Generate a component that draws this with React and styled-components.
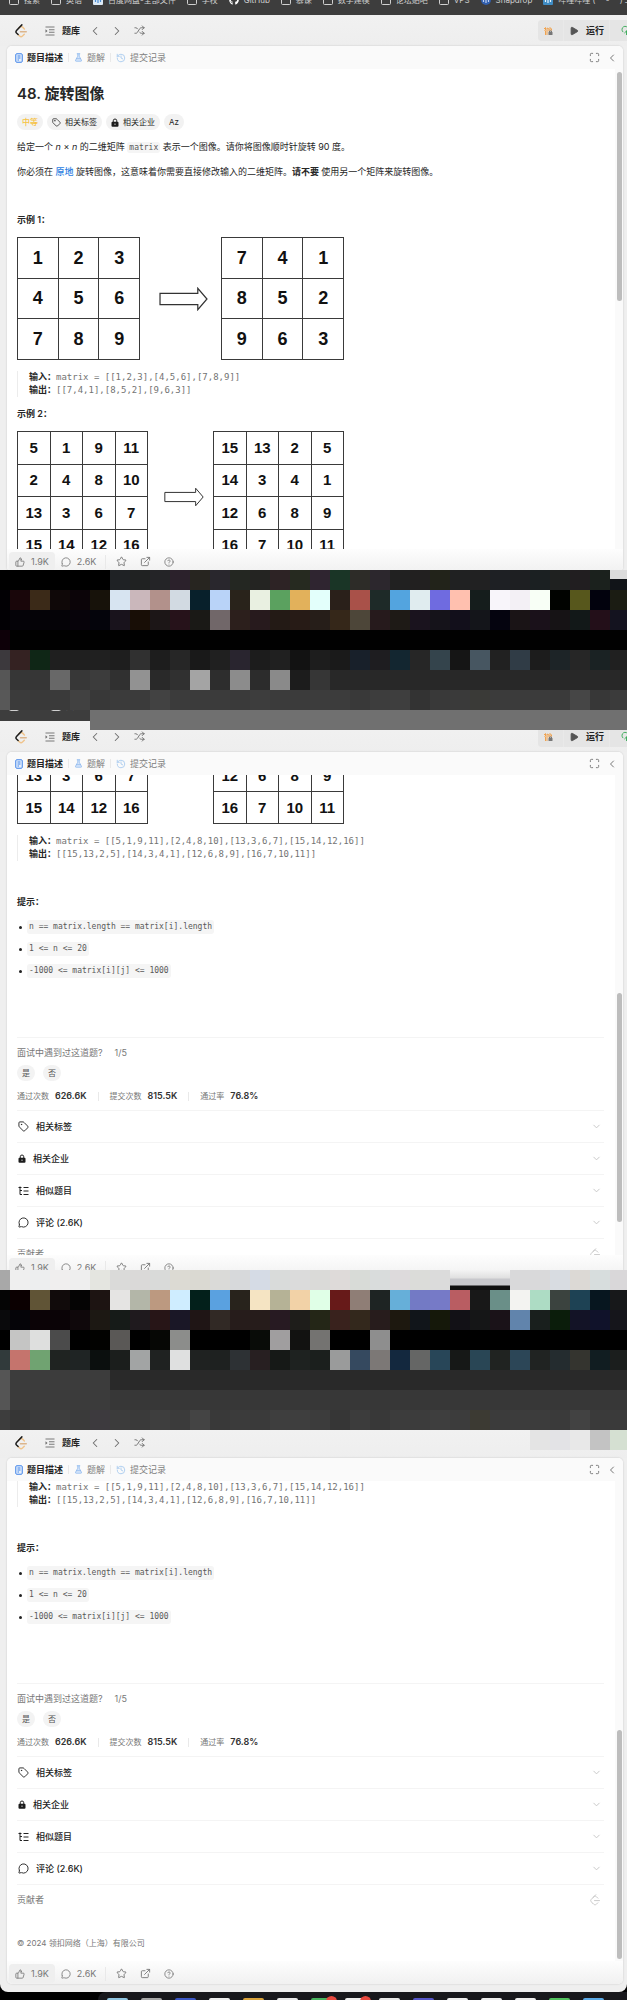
import React from "react";
import styled, { createGlobalStyle, css } from "styled-components";
import {
  Tag, MessageCircle, Star, ExternalLink, CircleQuestionMark, ThumbsUp,
  Shuffle, ChevronLeft, ChevronRight, ChevronDown, Maximize, History, Play,
  CloudUpload, FlaskConical,
} from "lucide-react";
import { FaGithub } from "react-icons/fa";

const Global = createGlobalStyle`
  * { box-sizing: border-box; }
  body { margin: 0; background: #000; font-family: Inter, "Noto Sans CJK SC", sans-serif; font-size: 9px; line-height: 14px; color: #262626; }
  h1, h2, p, ul, pre, figure { margin: 0; padding: 0; }
  button { font: inherit; color: inherit; border: 0; padding: 0; background: none; }
  a { color: inherit; text-decoration: none; }
  svg { flex: none; display: block; }
`;

const mono = css`font-family: "DejaVu Sans Mono", "Noto Sans CJK SC", monospace;`;

/* ---------- window frame ---------- */
const Window = styled.section`
  position: relative;
  background: #efefef;
  overflow: hidden;
  ${(p) => p.$crop && `height: ${p.$crop}px;`}
  ${(p) => p.$last && "border-radius: 0 0 8px 8px;"}
`;

const Bookmarks = styled.nav`
  height: ${(p) => (p.$cut ? 11 : 15)}px;
  background: #3d3d3d;
  overflow: hidden;
`;
const BookmarkRow = styled.div`
  display: flex;
  gap: 11px;
  padding-left: 9px;
  margin-top: -${(p) => (p.$cut ? 9 : 5)}px;
  white-space: nowrap;
`;
const Bookmark = styled.a`
  display: flex;
  flex: none;
  align-items: center;
  gap: 5px;
  font-size: 8px;
  line-height: 10px;
  color: #d0d0d0;
`;

const Header = styled.header`
  height: ${(p) => (p.$cut ? 28 : 31)}px;
  display: flex;
  align-items: center;
  justify-content: space-between;
  padding-left: 14px;
  padding-bottom: ${(p) => (p.$cut ? 3 : 0)}px;
  background: linear-gradient(#f1f1f1, #eeeeee);
`;
const HeaderSide = styled.div`
  display: flex;
  align-items: center;
  color: #6c6c6c;
`;
const BrandLink = styled.a`margin-right: 17px;`;
const BankLink = styled.a`
  display: flex;
  align-items: center;
  gap: 7px;
  margin-right: 4px;
  strong { color: #222; font-weight: 600; }
`;
const ArrowButton = styled.button`
  width: 22px;
  display: flex;
  justify-content: center;
`;
const RunGroup = styled.div`
  display: flex;
  height: 21px;
  background: #e9e9e9;
  border-radius: 4px 0 0 4px;
  overflow: hidden;
`;
const RunButton = styled.button`
  display: flex;
  align-items: center;
  gap: 7px;
  padding: 0 5px;
  margin-right: 1px;
  color: #222;
  font-weight: 600;
  background: #e5e5e5;
`;
const DailyButton = styled(RunButton)`width: 25px;`;
const CloudButton = styled(RunButton)`
  width: 17px;
  margin: 0;
  padding-left: 11px;
  color: #35a853;
`;

/* ---------- panel ---------- */
const Panel = styled.div`
  margin: 0 4px 0 7px;
  background: #fff;
  border-radius: 5px;
  box-shadow: 0 0 2px rgba(0, 0, 0, 0.18);
  overflow: hidden;
  ${(p) => p.$last && "margin-bottom: 8px;"}
`;
const TabBar = styled.div`
  display: flex;
  align-items: center;
  height: 23px;
  padding: 0 5px 0 8px;
  background: #fafafa;
`;
const Tab = styled.button`
  display: flex;
  align-items: center;
  gap: 4px;
  color: ${(p) => (p.$active ? "#222" : "#808080")};
  font-weight: ${(p) => (p.$active ? 600 : 400)};
`;
const Divider = styled.span`
  width: 1px;
  height: ${(p) => p.$h || 9}px;
  margin: 0 ${(p) => p.$m || 5}px;
  background: #e9e9e9;
`;
const TabTools = styled.div`
  display: flex;
  gap: 6px;
  margin-left: auto;
  color: #777;
`;
const Viewport = styled.div`
  display: flex;
  height: 480px;
  overflow: hidden;
`;
const Scrolled = styled.div`
  flex: 1;
  min-width: 0;
  padding: 0 11px 0 10px;
  margin-top: -${(p) => p.$by || 0}px;
`;
const Rail = styled.div`
  width: 8px;
  padding: ${(p) => p.$top}px 1px 0 2px;
  background: #fafafa;
`;
const Thumb = styled.div`
  height: 229px;
  border-radius: 3px;
  background: #bdbdbd;
`;

/* ---------- problem text ---------- */
const Title = styled.h1`
  padding-top: 13px;
  font-size: 15px;
  line-height: 24px;
  font-weight: 600;
`;
const Pills = styled.div`
  display: flex;
  gap: 4px;
  margin-top: 8px;
`;
const Pill = styled.button`
  display: flex;
  align-items: center;
  gap: 4px;
  height: 16px;
  padding: 0 5px;
  border-radius: 8px;
  background: #f2f2f2;
  font-size: 8px;
  ${(p) => p.$level && "color: #f6c243; font-weight: 500;"}
`;
const Para = styled.p`
  margin-top: 10px;
  a { color: #2a7de1; font-weight: 500; }
`;
const Code = styled.code`
  ${mono}
  font-size: 8px;
  padding: 1px 2px;
  border-radius: 3px;
  background: #f5f5f5;
  color: #595959;
`;
const Heading = styled.h2`
  font-size: 9px;
  line-height: 14px;
  font-weight: 600;
  margin-top: ${(p) => (p.$wide ? 34 : 10)}px;
`;
const Figure = styled.figure`
  display: flex;
  align-items: center;
  justify-content: space-between;
  width: 327px;
  margin-top: ${(p) => (p.$flush ? 0 : 10)}px;
  > svg { margin-left: 6px; }
`;
const Matrix = styled.table`
  border-collapse: collapse;
  table-layout: fixed;
  width: ${(p) => (p.$small ? 131 : 123)}px;
  height: ${(p) => p.$h}px;
  font: bold ${(p) => (p.$small ? 15 : 18)}px/18px "Liberation Sans", sans-serif;
  color: #111;
  td { border: 1px solid #3a3a3a; padding: 0; text-align: center; }
`;
const Example = styled.pre`
  ${mono}
  font-size: 9px;
  line-height: 13px;
  margin-top: ${(p) => (p.$flush ? 0 : 11)}px;
  padding-left: 11px;
  border-left: 1px solid #ececec;
  color: #737373;
  b { color: #262626; font-weight: 600; }
`;
const Hints = styled.ul`
  display: flex;
  flex-direction: column;
  gap: 8px;
  margin-top: 11px;
  padding-left: 2px;
  list-style: none;
`;
const Hint = styled.li`
  display: flex;
  align-items: center;
  gap: 5px;
  line-height: 14px;
  &::before { content: ""; width: 3px; height: 3px; border-radius: 50%; background: #222; }
  code { line-height: 12px; }
`;

/* ---------- statistics and accordions ---------- */
const Survey = styled.div`
  margin-top: 59px;
  padding-top: 8px;
  border-top: 1px solid #f4f4f4;
  color: #777;
`;
const Question = styled.div`
  display: flex;
  gap: 12px;
`;
const Answers = styled.div`
  display: flex;
  gap: 8px;
  margin-top: 5px;
`;
const Answer = styled.button`
  width: 18px;
  height: 16px;
  border-radius: 8px;
  background: #f3f3f3;
  color: #555;
  font-size: 8px;
`;
const Stats = styled.div`
  display: flex;
  align-items: center;
  margin: 8px 0 7px;
  font-size: 8px;
  b { margin-left: 6px; font-size: 9px; font-weight: 600; color: #333; }
`;
const Row = styled.button`
  display: flex;
  align-items: center;
  width: 100%;
  height: 32px;
  gap: 7px;
  padding: 0 2px 0 1px;
  border-top: 1px solid #f4f4f4;
  color: #222;
  font-weight: 500;
  svg:last-child { margin-left: auto; color: #c4c4c4; }
`;
const Contributors = styled.div`
  display: flex;
  align-items: center;
  justify-content: space-between;
  height: 30px;
  padding-right: 3px;
  border-top: 1px solid #f4f4f4;
  color: #777;
`;
const Copyright = styled.p`
  margin-top: 22px;
  font-size: 8px;
  color: #777;
`;

/* ---------- panel footer ---------- */
const Footer = styled.footer`
  display: flex;
  align-items: center;
  height: 23px;
  padding: 3px 2px 1px;
  color: #777;
  background: linear-gradient(#fdfdfd, #f1f1f1);
`;
const FootButton = styled.button`
  display: flex;
  align-items: center;
  justify-content: center;
  gap: 6px;
  height: 19px;
  padding: 0 6px;
  border-radius: 4px;
  background: ${(p) => (p.$on ? "#efefef" : "none")};
`;
const FootIcon = styled.button`
  display: flex;
  justify-content: center;
  width: 24px;
`;

/* ---------- pixelated strips ---------- */
const Strip = styled.div`
  display: flex;
  height: 20px;
  overflow: hidden;
`;
const Cell = styled.span`
  flex: 0 0 20px;
  ${(p) => p.$lead && "flex-basis: 10px;"}
  &:last-child { flex-grow: 1; }
`;
const Cover = styled.div`
  position: absolute;
  top: 0;
  right: 0;
  left: ${(p) => p.$left}px;
  overflow: hidden;
`;

/* ---------- dock ---------- */
const Dock = styled.div`
  display: flex;
  align-items: flex-end;
  gap: 13px;
  height: 8px;
  margin-left: 98px;
  padding-left: 9px;
  overflow: hidden;
  background: #18181c;
  border-radius: 8px 0 0 0;
`;
const DockIcon = styled.span`
  position: relative;
  flex: 0 0 21px;
  height: 2px;
  border-radius: 3px 3px 0 0;
  background: ${(p) => p.$c};
`;
const Badge = styled.i`
  position: absolute;
  right: -5px;
  top: -2px;
  width: 11px;
  height: 11px;
  border-radius: 50%;
  background: #e8493f;
`;

/* ---------- icons ---------- */
const Logo = ({ muted, size = 14 }) => (
  <svg width={size} height={size} viewBox="0 0 24 24" fill="none" strokeWidth={muted ? 1.8 : 2.5} strokeLinecap="round">
    <path d="M8 7l2-1.8c1.6-1.2 3.4-1.1 4.8.2l3 3M7 18l2.6 2.6c1.5 1.3 3.5 1.3 5 0l3-3" stroke={muted ? "#c4c4c4" : "#f0c48c"} />
    <path d="M11 13.2h10" stroke={muted ? "#c4c4c4" : "#dcb58c"} />
    <path d="M13.5 1.5L4.3 11c-1.2 1.4-1.2 3.2 0 4.5L7 18" stroke={muted ? "#c4c4c4" : "#1c1c1c"} />
  </svg>
);
const ListIcon = () => (
  <svg width="10" height="10" viewBox="0 0 20 20" fill="none" stroke="currentColor" strokeWidth="1.8">
    <path d="M1 2h18M8 7.5h11M8 12.5h11M1 18h18" />
    <path d="M1 6.5l4 3.5-4 3.500z" fill="currentColor" stroke="none" />
  </svg>
);
const DocIcon = () => (
  <svg width="8" height="10" viewBox="0 0 16 20" fill="none" stroke="#3f83e8" strokeWidth="2">
    <rect x="1.500" y="1.500" width="13" height="17" rx="2" fill="#e6effc" />
    <path d="M5 6h6M5 10h6M5 14h3" />
  </svg>
);
const LockIcon = () => (
  <svg width="8" height="9" viewBox="0 0 16 18">
    <path d="M4.500 8V5.500a3.500 3.500 0 0 1 7 0V8" fill="none" stroke="#222" strokeWidth="2" />
    <rect x="1" y="7.500" width="14" height="10" rx="2" fill="#1c1c1c" />
    <path d="M8 11v3" stroke="#fff" strokeWidth="1.500" />
  </svg>
);
const TreeIcon = () => (
  <svg width="11" height="10" viewBox="0 0 22 20" fill="none" stroke="#222" strokeWidth="2">
    <path d="M4 1v16h4M4 9h4M1 3h6M11 3h10M11 10h10M11 17h10" />
  </svg>
);
const DailyIcon = () => (
  <svg width="10" height="10" viewBox="0 0 20 20" fill="none" strokeWidth="2">
    <path d="M2 6l3-3v15M8 18V4l4 2v5M14 9V3l3 3v3" stroke="#f0a24e" />
    <path d="M2 9h14" stroke="#f0c08c" />
    <rect x="11" y="12" width="8" height="6" rx="1" fill="#777" />
    <path d="M13 12v-2h4v2" stroke="#777" />
  </svg>
);
const FolderIcon = () => (
  <svg width="10" height="10" viewBox="0 0 10 10" fill="none" stroke="#d0d0d0">
    <rect x="0.500" y="1" width="9" height="8.500" rx="1" />
  </svg>
);
const AppIcon = ({ bg, fg, round }) => (
  <svg width="10" height="10" viewBox="0 0 10 10">
    <rect width="10" height="10" rx={round ? 5 : 1} fill={bg} />
    <path d="M2.500 4.500v2.500M5 4v4M7.500 4.500v2.500" stroke={fg} strokeWidth="1.200" />
  </svg>
);
const BigArrow = ({ w, h }) => (
  <svg width={w} height={h} viewBox="0 0 48 23" fill="#fff" stroke="#333" strokeWidth="1.200">
    <path d="M1 6h37V1l9 10.500L38 22v-5H1z" />
  </svg>
);

/* ---------- composed parts ---------- */
const marks = [
  ["搜索"], ["英语"], ["百度网盘-全部文件", <AppIcon bg="#dce9f5" fg="#4d8fd6" />], ["学校"],
  ["GitHub", <FaGithub size={10} color="#fff" />], ["慕课"], ["数学建模"], ["论坛贴吧"], ["VPS"],
  ["Snapdrop", <AppIcon bg="#315fae" fg="#bcd0f0" round />],
  ["哔哩哔哩 ( ゜- ゜)つロ", <AppIcon bg="#3f8cc4" fg="#e8f4ff" />],
];
const BookmarkBar = ({ cut }) => (
  <Bookmarks $cut={cut}>
    <BookmarkRow $cut={cut}>
      {(cut ? marks.slice(0, 2) : marks).map(([name, icon]) => (
        <Bookmark key={name} href="#">{icon || <FolderIcon />}{name}</Bookmark>
      ))}
    </BookmarkRow>
  </Bookmarks>
);

const TopBar = ({ cut }) => (
  <Header $cut={cut}>
    <HeaderSide>
      <BrandLink href="#" aria-label="LeetCode"><Logo /></BrandLink>
      <BankLink href="#"><ListIcon /><strong>题库</strong></BankLink>
      <ArrowButton aria-label="Previous"><ChevronLeft size={14} strokeWidth={1.8} /></ArrowButton>
      <ArrowButton aria-label="Next"><ChevronRight size={14} strokeWidth={1.8} /></ArrowButton>
      <ArrowButton aria-label="Shuffle"><Shuffle size={11} /></ArrowButton>
    </HeaderSide>
    {!cut && (
      <RunGroup>
        <DailyButton aria-label="Daily"><DailyIcon /></DailyButton>
        <RunButton><Play size={10} fill="#555" color="#555" />运行</RunButton>
        <CloudButton aria-label="Submit"><CloudUpload size={11} /></CloudButton>
      </RunGroup>
    )}
  </Header>
);

const Tabs = () => (
  <TabBar>
    <Tab $active><DocIcon />题目描述</Tab>
    <Divider />
    <Tab><FlaskConical size={9} color="#8db8ee" fill="#d5e5fa" />题解</Tab>
    <Divider />
    <Tab><History size={10} color="#a3c8ee" />提交记录</Tab>
    <TabTools>
      <button aria-label="Fullscreen"><Maximize size={11} /></button>
      <button aria-label="Collapse"><ChevronLeft size={12} /></button>
    </TabTools>
  </TabBar>
);

const Grid = ({ rows, small }) => (
  <Matrix $small={small} $h={small ? Math.floor((rows.length * 131 + 1) / 4) : 123}>
    <tbody>
      {rows.map((r, i) => <tr key={i}>{r.map((n) => <td key={n}>{n}</td>)}</tr>)}
    </tbody>
  </Matrix>
);

const in4 = [[5, 1, 9, 11], [2, 4, 8, 10], [13, 3, 6, 7], [15, 14, 12, 16]];
const out4 = [[15, 13, 2, 5], [14, 3, 4, 1], [12, 6, 8, 9], [16, 7, 10, 11]];

const Intro = () => (
  <>
    <Title>48. 旋转图像</Title>
    <Pills>
      <Pill $level>中等</Pill>
      <Pill><Tag size={9} />相关标签</Pill>
      <Pill><LockIcon />相关企业</Pill>
      <Pill>Az</Pill>
    </Pills>
    <Para>给定一个 <em>n</em> × <em>n</em> 的二维矩阵 <Code>matrix</Code> 表示一个图像。请你将图像顺时针旋转 90 度。</Para>
    <Para>你必须在 <a href="#">原地</a> 旋转图像，这意味着你需要直接修改输入的二维矩阵。<strong>请不要 </strong>使用另一个矩阵来旋转图像。</Para>
    <Heading $wide>示例 1：</Heading>
    <Figure>
      <Grid rows={[[1, 2, 3], [4, 5, 6], [7, 8, 9]]} />
      <BigArrow w={49} h={24} />
      <Grid rows={[[7, 4, 1], [8, 5, 2], [9, 6, 3]]} />
    </Figure>
    <Example><b>输入：</b>matrix = [[1,2,3],[4,5,6],[7,8,9]]{"\n"}<b>输出：</b>[[7,4,1],[8,5,2],[9,6,3]]</Example>
    <Heading>示例 2：</Heading>
    <Figure>
      <Grid small rows={in4} />
      <BigArrow w={40} h={20} />
      <Grid small rows={out4} />
    </Figure>
  </>
);

const Rest = ({ flush, full }) => (
  <>
    <Example $flush={flush}><b>输入：</b>matrix = [[5,1,9,11],[2,4,8,10],[13,3,6,7],[15,14,12,16]]{"\n"}<b>输出：</b>[[15,13,2,5],[14,3,4,1],[12,6,8,9],[16,7,10,11]]</Example>
    <Heading $wide>提示：</Heading>
    <Hints>
      <Hint><Code>n == matrix.length == matrix[i].length</Code></Hint>
      <Hint><Code>1 &lt;= n &lt;= 20</Code></Hint>
      <Hint><Code>-1000 &lt;= matrix[i][j] &lt;= 1000</Code></Hint>
    </Hints>
    <Survey>
      <Question><span>面试中遇到过这道题?</span><span>1/5</span></Question>
      <Answers><Answer>是</Answer><Answer>否</Answer></Answers>
      <Stats>
        通过次数<b>626.6K</b><Divider $m={11} />提交次数<b>815.5K</b><Divider $m={11} />通过率<b>76.8%</b>
      </Stats>
    </Survey>
    <Row><Tag size={11} />相关标签<ChevronDown size={11} /></Row>
    <Row><LockIcon />相关企业<ChevronDown size={11} /></Row>
    <Row><TreeIcon />相似题目<ChevronDown size={11} /></Row>
    <Row><MessageCircle size={11} />评论 (2.6K)<ChevronDown size={11} /></Row>
    <Contributors>贡献者<Logo muted size={12} /></Contributors>
    {full && <Copyright>© 2024 领扣网络（上海）有限公司</Copyright>}
  </>
);

const PanelFooter = () => (
  <Footer>
    <FootButton $on><ThumbsUp size={10} />1.9K</FootButton>
    <FootButton><MessageCircle size={10} />2.6K</FootButton>
    <Divider $m={3} $h={14} />
    <FootIcon aria-label="Favourite"><Star size={11} /></FootIcon>
    <FootIcon aria-label="Share"><ExternalLink size={11} /></FootIcon>
    <FootIcon aria-label="Help"><CircleQuestionMark size={10} /></FootIcon>
  </Footer>
);

const Body = ({ scroll, thumb, last, children }) => (
  <Panel $last={last}>
    <Tabs />
    <Viewport>
      <Scrolled $by={scroll}>{children}</Scrolled>
      <Rail $top={thumb}><Thumb /></Rail>
    </Viewport>
    <PanelFooter />
  </Panel>
);

const fill = (n, c) => Array(n).fill(c);
const hex = (s) => s.split(" ").map((c) => "#" + c);
const edge = "linear-gradient(#dcdcdc 0 9px, #111418 9px)";
const gap = "linear-gradient(#f4f4f4, #e0e0e0 8px, #c8c8cc 9px 15px, #101010 16px)";

const stripsA = [
  [...fill(6, "#000"), ...hex("1f2225 202222 242427 2b212b 272520 29272d 242722 242422 2d2325 262a20 2f2530 1a3526 2d2c28 2c272d 212121 222020 22231a 202122 212122 1e2024 1e1f22 1b2022 1f2120 211e20 1b211d"), edge],
  hex("020004 19060a 3b2a18 0f0808 0b0408 17120a d7e4f1 cab7bb b2918b d2dae2 08202b b9d3f8 29231b e9f0e1 5ba15f e2b15b e3fffb 2a201a a95149 1e2a28 53a4df e0ecef 6f6be0 ffc0af 151d1c f8f5fa f3f0f5 f8fff6 010300 57571c 02020d 1b1c13"),
  hex("020004 050308 050307 050307 07030a 04040b 19131c 180e06 1c1617 26121a 1a1916 716769 2c1f1c 271a1d 231a15 271b16 261e19 352719 4d4639 261a1c 1e1a16 1a131e 15131a 120f1b 14151a 05040f 1a1416 1a111a 161315 121818 230f19 14131f"),
  ["#0d0008", ...fill(31, "#010101")],
  hex("3c393d 342222 0f2616 1f1f1f 1f1f1f 202020 1e1e1e 303030 1d1d1d 262626 191919 202020 29252f 1c1c1c 202020 121212 1d1d1d 1a1a1a 18202a 1e1d20 132630 262626 34444c 151515 475661 212121 303c46 1c1c1c 1d2427 262626 1a2223 202020"),
  [...hex("565656 363636 363636 686868 373737 3c3c3c 303030 929292 292929 303030 a4a4a4 2d2d2d 8c8c8c 2c2c2c 8a8a8a 1c1c1c 363636"), ...fill(15, "#282828")],
  hex("585858 3b3b3b 393939 3a3a3a 414141 383838 3b3b3b 3b3b3b 424242 3b3b3b 3b3b3b 3b3b3b 3a3a3a 3d3d3d 3b3b3b 3b3b3b 3c3c3c 3c3c3c 393939 3d3d3d 3e3e3e 333333 393939 3a3a3a 3a3a37 3b3b3b 3b3b3b 3b3b3b 3a3a3a 464646 373737 3b3b3b"),
];

const stripsB = [
  [...hex("a8a8a8 efefef edeeef f0eeee eeeeee e4e5e0 dadad9 dad9d8 d9dad9 dcdad3 dad9d2 dadad8 d7d9db d5dbe5 d9dbda dbdbdb dadad8 dedad9 d8dbd7 d9dcdc dddadc dbdcd9 dbdbdb"), gap, gap, gap, ...hex("d9d9da d9d9da d8dce1 dcd9d5 d7dddd d9d7d9")],
  hex("050505 0b0001 605436 110b0b 050404 1d1412 e5e4e3 b3b6a8 bc9980 cfedff 03201b 5aa1e0 28231c f5e4c3 b5b296 f2d2a7 e0ffe7 671a19 8f7e76 1e2423 66afd9 737ac5 767ac7 b95d62 181818 6a8f88 f3f3f1 addcc4 3b433f 1e4254 07161f 17181a"),
  hex("0a0a0c 050408 0b0306 0a0306 0f080b 1c1813 161b18 1f1a1e 271517 1a1726 1f1515 312925 261c1b 261c1b 271a22 1e1d1a 242617 39221d 33281c 271c1c 1d180f 11151a 15180a 121116 151617 1a1218 6184ac 191f1d 0b1d0b 131326 10122a 15151b"),
  [...hex("000000 c5c5c4 dedfde 4b4b4b 000000 020200 5a5856 000000 060705 8c8d8b 000000 000000 000000 090c08 a09e9f 121211 747371 000000 000000 8e8e8e"), ...fill(12, "#000")],
  hex("313a3b c5746d 70a371 1f2321 1f2424 0b0f0e 1b1e1c a2a4a4 1f2221 dfe0e0 1f2221 1e2120 2d3134 271f21 161917 1e2220 1b1f1d 9a9b9b 35495f 7c7876 13283e 656665 284658 161817 294655 202321 2c4657 202322 242c2f 34342f 111d21 1b1e1d"),
  ["#555", ...fill(5, "#3c3c3c"), ...fill(26, "#292929")],
  ["#555", ...fill(5, "#3b3b3b"), ...fill(26, "#373737")],
  hex("3d3d3d 363636 3a3a3a 3e3e3e 3a3a3a 3d3a3e 3c3c3c 3a3a3a 3e3e3e 3b3b3b 444444 393939 3b3b3b 3a3a3a 3e3e3e 3e3e3e 3c3c3c 363636 3c3c3c 383838 3c3c3c 3c3c3c 3e3e3e 3c3c3c 3c3a33 3b3b3b 3c3c3c 3c3c3c 3a3a3a 424242 3a3a3a 3a3a3a"),
];

const Pixels = ({ rows, lead = true }) => rows.map((row, r) => (
  <Strip key={r}>
    {row.map((c, i) => <Cell key={i} $lead={lead && i === 0} style={{ background: c }} />)}
  </Strip>
));

const dock = ["#8fc4e0", "#a8a8a8", "#3b57c4", "#eee", "#d8a23a", "#e8e8e8", "#49b35e", "#eee", "#e8e8e8", "#5656c8", "#eee", "#eee", "#eee", "#52c15e", "#5aa9e6"];

export default function App() {
  return (
    <main>
      <Global />
      <Window $crop={570}>
        <BookmarkBar />
        <TopBar />
        <Body thumb={3}><Intro /></Body>
      </Window>
      <Pixels rows={stripsA} />
      <Window $crop={560}>
        <BookmarkBar cut />
        <TopBar />
        <Body scroll={16} thumb={218}>
          <Figure $flush>
            <Grid small rows={in4.slice(2)} />
            <Grid small rows={out4.slice(2)} />
          </Figure>
          <Rest />
        </Body>
        <Cover $left={90}><Pixels lead={false} rows={[["#707070"]]} /></Cover>
      </Window>
      <Pixels rows={stripsB} />
      <Window $last>
        <TopBar cut />
        <Body last thumb={249}><Rest flush full /></Body>
        <Cover $left={530}><Pixels lead={false} rows={[hex("e4e4e4 e3e3e6 e8e8e8 c3c3c3 d5e0d2")]} /></Cover>
      </Window>
      <Dock>
        {dock.map((c, i) => <DockIcon key={i} $c={c}>{(i === 6 || i === 7) && <Badge />}</DockIcon>)}
      </Dock>
    </main>
  );
}
